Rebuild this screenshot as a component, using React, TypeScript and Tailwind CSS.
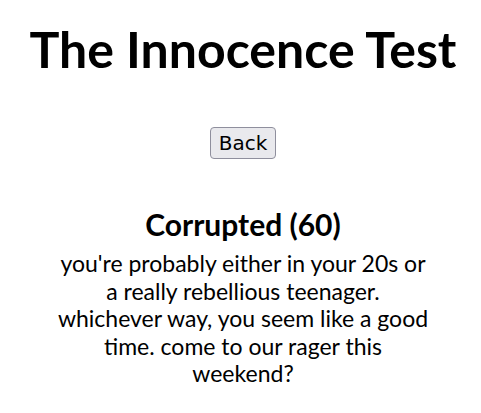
export default function App() {
  return (
    <div className="min-h-screen bg-white pl-[5px] text-black text-center font-['Lato',sans-serif]">
      <h1 className="pt-[20px] text-[50px] font-bold leading-[58px]">The Innocence Test</h1>
      <div className="mt-[49px]">
        <button className="rounded-[4px] border border-[#8f8f9d] bg-[#e9e9ed] px-2 py-[3px] text-[20px] leading-[24px] font-['DejaVu_Sans',sans-serif]">
          Back
        </button>
      </div>
      <h2 className="mt-[47px] text-[30px] font-bold leading-[36px]">Corrupted (60)</h2>
      <p className="mx-auto mt-[8px] w-[372px] text-[23px] leading-[27.5px]">
        you're probably either in your 20s or a really rebellious teenager. whichever way, you seem like a good time. come to our rager this weekend?
      </p>
    </div>
  )
}
